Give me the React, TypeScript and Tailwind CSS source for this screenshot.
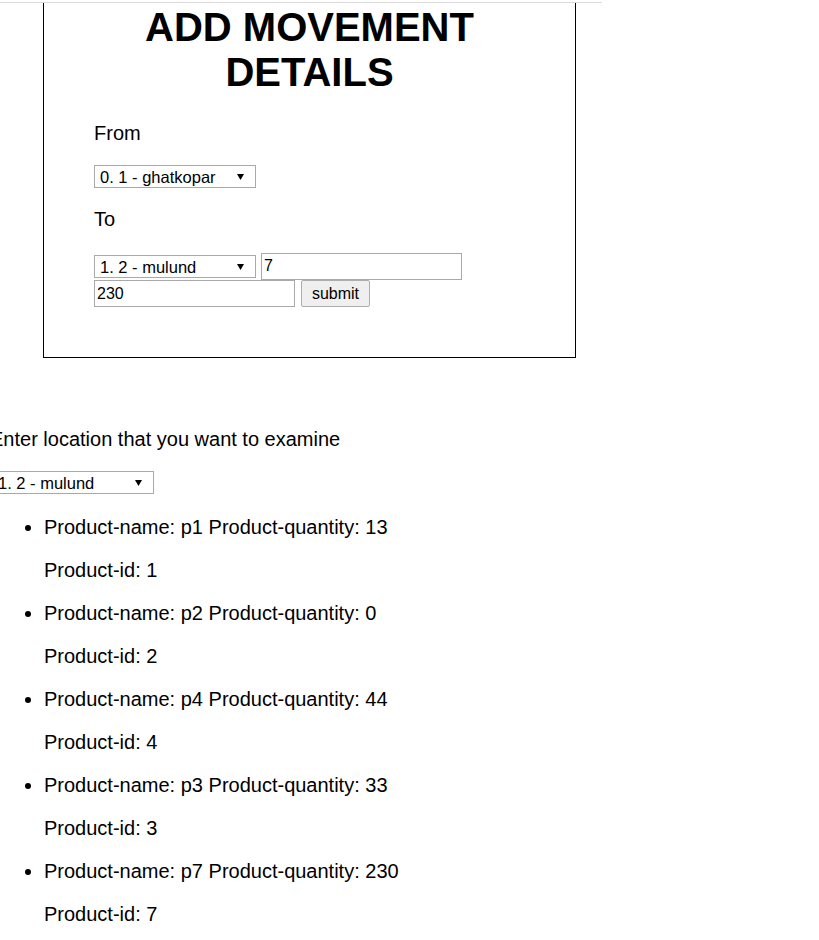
import React from "react";

type Product = {
  name: string;
  quantity: number;
  id: number;
};

const products: Product[] = [
  { name: "p1", quantity: 13, id: 1 },
  { name: "p2", quantity: 0, id: 2 },
  { name: "p4", quantity: 44, id: 4 },
  { name: "p3", quantity: 33, id: 3 },
  { name: "p7", quantity: 230, id: 7 },
];

const locations = ["0. 1 - ghatkopar", "1. 2 - mulund"];

const Select: React.FC<{ value: string; className?: string }> = ({ value, className = "" }) => (
  <div className={`relative w-[162px] h-[23px] border border-[#a9a9a9] bg-white shrink-0 ${className}`}>
    <select
      defaultValue={value}
      className="appearance-none w-full h-full pl-[5px] pr-[20px] text-[16.5px] leading-[21px] text-black bg-transparent outline-none"
    >
      {locations.map((loc) => (
        <option key={loc} value={loc}>
          {loc}
        </option>
      ))}
    </select>
    <svg
      className="pointer-events-none absolute right-[11px] top-[8px]"
      width="7"
      height="6"
      viewBox="0 0 7 6"
    >
      <polygon points="0,0 7,0 3.5,6" fill="#000" />
    </svg>
  </div>
);

const TextInput: React.FC<{ value: string; className?: string }> = ({ value, className = "" }) => (
  <input
    type="text"
    defaultValue={value}
    className={`w-[201px] h-[27px] border border-[#a9a9a9] px-[2px] text-[16px] text-black bg-white outline-none shrink-0 ${className}`}
  />
);

export default function App() {
  return (
    <div className="w-[819px] min-h-[940px] overflow-hidden bg-white text-black font-['Liberation_Sans',Arial,sans-serif]">
      <div className="h-px w-[602px] mt-[2px] bg-[#dcdcdc]" />

      {/* movement form */}
      <div className="ml-[43px] w-[533px] border border-t-0 border-black px-[50px] pt-[2px] pb-[50px]">
        <h1 className="text-[40px] leading-[45px] font-bold text-center">ADD MOVEMENT DETAILS</h1>
        <p className="mt-[27px] text-[20px] leading-[23px]">From</p>
        <Select value={locations[0]} className="mt-[20px]" />
        <p className="mt-[20px] text-[20px] leading-[23px]">To</p>
        <div className="mt-[21px] flex items-center gap-[5px] h-[28px]">
          <Select value={locations[1]} />
          <TextInput value="7" />
        </div>
        <div className="flex items-center gap-[6px] h-[27px]">
          <TextInput value="230" />
          <button className="w-[69px] h-[27px] border border-[#adadad] rounded-[2px] bg-[#efefef] text-[16px] text-black">
            submit
          </button>
        </div>
      </div>

      {/* examine location */}
      <p className="mt-[70px] ml-[-10px] text-[20px] leading-[23px]">Enter location that you want to examine</p>
      <Select value={locations[1]} className="mt-[20px] ml-[-8px]" />
      <ul className="mt-[22px] ml-[-10px] pl-[54px] list-disc text-[20px] leading-[23px]">
        {products.map((p) => (
          <li key={p.id}>
            <p>
              Product-name: {p.name} Product-quantity: {p.quantity}
            </p>
            <p className="mt-[20px] mb-[20px]">Product-id: {p.id}</p>
          </li>
        ))}
      </ul>
    </div>
  );
}
